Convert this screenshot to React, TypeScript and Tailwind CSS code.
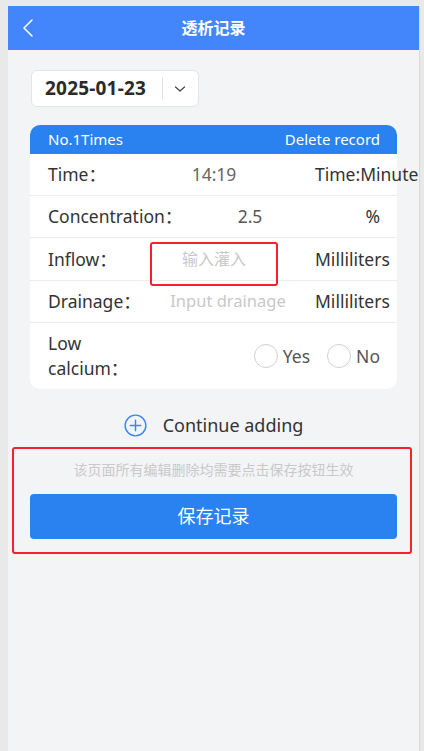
import React from "react";

const font = { fontFamily: '"Noto Sans", "Noto Sans CJK SC", sans-serif' };

function Radio({ label }: { label: string }) {
  return (
    <div className="flex items-center">
      <span className="block w-[24px] h-[24px] rounded-full border border-[#cfcfcf] bg-white" />
      <span className="ml-[5px] text-[17.5px] text-[#555]">{label}</span>
    </div>
  );
}

export default function App() {
  return (
    <div className="w-[424px] h-[751px] bg-[#e9e9e9] pt-[6px] pl-[8px] pr-[4px] overflow-hidden" style={font}>
      <div className="h-full bg-[#f3f4f6] border-r border-[#d9d9d9] flex flex-col">
        {/* Header */}
        <div className="relative h-[44px] bg-[#4386fc] flex items-center justify-center shrink-0">
          <svg className="absolute left-[14px] top-[12px]" width="12" height="20" viewBox="0 0 12 20" fill="none">
            <path d="M10 2 L2 10 L10 18" stroke="white" strokeWidth="1.6" strokeLinecap="round" strokeLinejoin="round" />
          </svg>
          <span className="text-white text-[16px] font-bold">透析记录</span>
        </div>

        {/* Date selector */}
        <div className="mt-[20px] ml-[23px] w-[168px] h-[37px] bg-white rounded-[6px] border border-[#e3e4e6] flex items-center">
          <span className="ml-[13px] text-[19px] font-bold text-[#2b2b2b] tracking-[0.2px]">2025-01-23</span>
          <span className="ml-[16px] w-px h-[23px] bg-[#e2e2e2]" />
          <svg className="ml-[11px]" width="12" height="8" viewBox="0 0 12 8" fill="none">
            <path d="M1.5 2 L6 6 L10.5 2" stroke="#444" strokeWidth="1.2" strokeLinecap="round" strokeLinejoin="round" />
          </svg>
        </div>

        {/* Card */}
        <div className="mt-[18px] mx-[22px] bg-white rounded-[10px]">
          <div className="h-[29px] bg-[#2a82f0] rounded-t-[10px] flex items-center justify-between pl-[18px] pr-[17px] text-white text-[15px]">
            <span>No.1Times</span>
            <span>Delete record</span>
          </div>

          <div className="h-[42px] flex items-center pl-[18px] border-b border-[#ececec] text-[17.5px] text-[#333]">
            <span className="w-[102px] shrink-0">Time：</span>
            <span className="w-[128px] shrink-0 text-center text-[#666]">14:19</span>
            <span className="ml-[37px] whitespace-nowrap">Time:Minute</span>
          </div>

          <div className="h-[42px] flex items-center pl-[18px] border-b border-[#ececec] text-[17.5px] text-[#333]">
            <span className="w-[138px] shrink-0 whitespace-nowrap">Concentration：</span>
            <span className="w-[128px] shrink-0 text-center text-[#555]">2.5</span>
            <span className="flex-1 text-right pr-[17px]">%</span>
          </div>

          <div className="relative h-[43px] flex items-center pl-[18px] border-b border-[#ececec] text-[17.5px] text-[#333]">
            <span className="w-[102px] shrink-0">Inflow：</span>
            <span className="w-[128px] shrink-0 text-center text-[#c8c8c8] text-[16px]">输入灌入</span>
            <span className="ml-[37px] whitespace-nowrap">Milliliters</span>
            <div className="absolute left-[120px] top-[4px] w-[128px] h-[44px] border-2 border-[#f5222d] rounded-[3px]" />
          </div>

          <div className="h-[42px] flex items-center pl-[18px] border-b border-[#ececec] text-[17.5px] text-[#333]">
            <span className="w-[116px] shrink-0">Drainage：</span>
            <span className="w-[128px] shrink-0 text-center text-[#c8c8c8] text-[16.5px] whitespace-nowrap">Input drainage</span>
            <span className="ml-[23px] whitespace-nowrap">Milliliters</span>
          </div>

          <div className="h-[66px] flex items-center pl-[18px] pr-[17px] text-[17.5px] text-[#333]">
            <span className="w-[80px] leading-[25px]">Low calcium：</span>
            <div className="ml-auto flex items-center gap-[17px]">
              <Radio label="Yes" />
              <Radio label="No" />
            </div>
          </div>
        </div>

        {/* Continue adding */}
        <div className="h-[40px] mt-[16px] flex items-center justify-center">
          <svg width="23" height="23" viewBox="0 0 24 24" fill="none">
            <circle cx="12" cy="12" r="10.8" stroke="#3a86f5" strokeWidth="1.5" />
            <path d="M12 6.5 V17.5 M6.5 12 H17.5" stroke="#3a86f5" strokeWidth="1.5" strokeLinecap="round" />
          </svg>
          <span className="ml-[16px] text-[18px] text-[#333]">Continue adding</span>
        </div>

        {/* Save area */}
        <div className="mt-[2px] ml-[4px] mr-[7px] h-[107px] border-2 border-[#f5222d] rounded-[3px] pl-[16px] pr-[13px] flex flex-col">
          <div className="h-[45px] pb-[5px] flex items-center justify-center text-[14px] text-[#c9c9c9]">
            该页面所有编辑删除均需要点击保存按钮生效
          </div>
          <button className="h-[45px] w-full bg-[#2a82f0] rounded-[4px] text-white text-[18px]">保存记录</button>
        </div>
      </div>
    </div>
  );
}
